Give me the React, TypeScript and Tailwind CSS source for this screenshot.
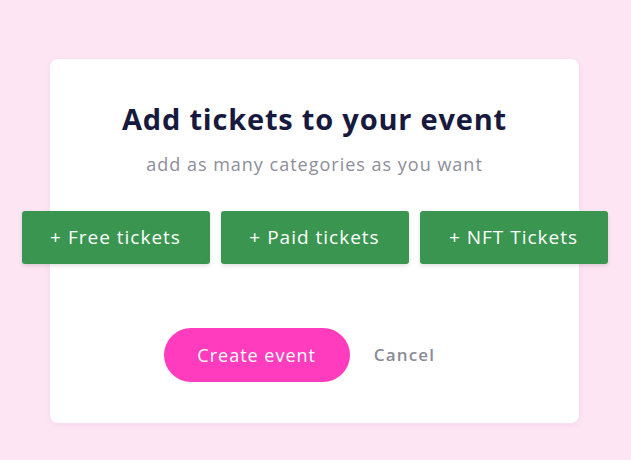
const tickets = ["+ Free tickets", "+ Paid tickets", "+ NFT Tickets"];

export default function App() {
	return (
		<div className="min-h-screen w-full bg-[#fde5f3] pt-[59px] pl-[50px] font-['Open_Sans',sans-serif]">
			<div className="flex h-[364px] w-[529px] flex-col items-center rounded-lg bg-white pt-[42px] shadow-[0_2px_6px_rgba(200,120,200,0.12)]">
				<h1 className="text-[29px] leading-[36px] font-bold tracking-[0.8px] text-[#171a3e]">Add tickets to your event</h1>
				<p className="mt-[15px] text-[18px] leading-[24px] tracking-[1px] text-[#8e8d9b]">add as many categories as you want</p>
				<div className="mt-[35px] flex gap-[11px]">
					{tickets.map((t) => (
						<button
							key={t}
							className="h-[53px] w-[188px] rounded-[3px] bg-[#3a9550] text-[19px] tracking-[1px] text-white shadow-[0_2px_4px_rgba(0,0,0,0.12)]"
						>
							{t}
						</button>
					))}
				</div>
				<div className="mt-[64px] flex items-center gap-[24px] pr-[30px]">
					<button className="h-[54px] w-[186px] rounded-full bg-[#ff3cbe] text-[18px] tracking-[1px] text-white">Create event</button>
					<button className="text-[17px] font-semibold tracking-[1.2px] text-[#8b8a97]">Cancel</button>
				</div>
			</div>
		</div>
	);
}
